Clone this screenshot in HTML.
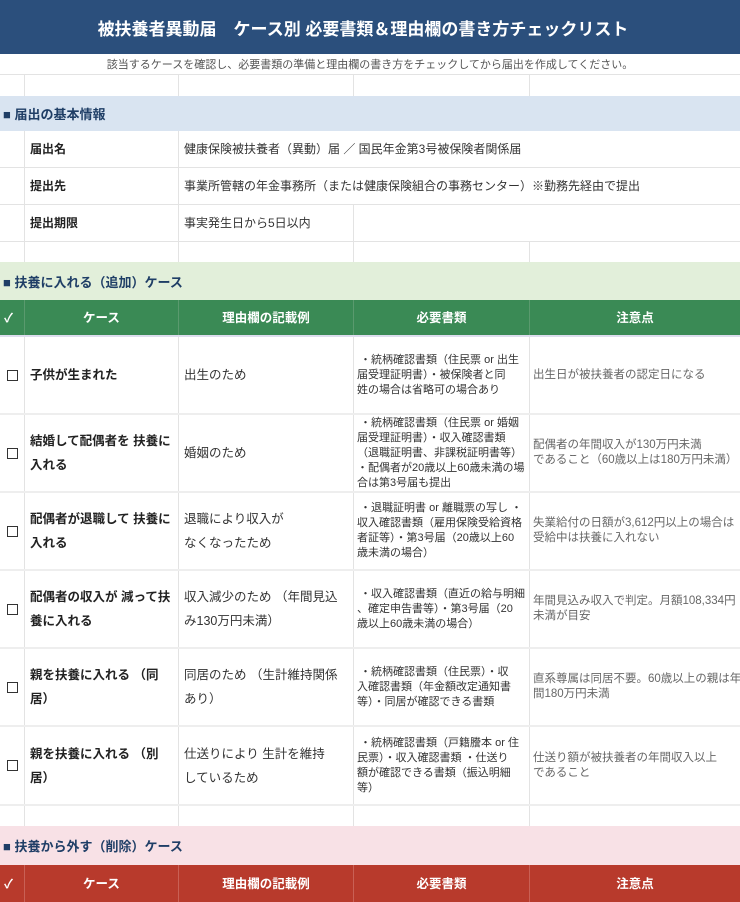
<!DOCTYPE html>
<html><head><meta charset="utf-8"><style>
*{margin:0;padding:0;box-sizing:border-box}
body{width:740px;height:880px;overflow:hidden;background:#fff;font-family:"Liberation Sans","Noto Sans CJK JP",sans-serif;color:#333;position:relative}
.r{position:absolute;left:0;width:740px}
.c{position:absolute;top:0;bottom:0;border-right:1px solid #e3e3e3;display:flex;align-items:center;font-size:12.5px;line-height:18px;padding:0 5px;white-space:nowrap}
.i{font-size:12px}
.b{font-weight:bold;color:#222;line-height:24px}
.g{color:#666;font-size:11.5px;line-height:15px;padding-left:3px}
.d{font-size:11px;line-height:15px;padding-left:3px}
.rs{line-height:24px}
.hd .c{color:#fff;font-weight:bold;justify-content:center;border-right:1px solid #5a9a6e}
.cb{justify-content:center}
.cb span{display:inline-block;width:11px;height:11px;border:1.3px solid #333}
.sec{font-size:13px;font-weight:bold;color:#1f3e66;padding-left:3px;display:flex;align-items:center}
</style></head><body>
<div class="r" style="top:0;height:54px;background:#2b4f7c;color:#fff;font-size:17px;font-weight:bold;display:flex;align-items:center;justify-content:center;padding-right:14px">被扶養者異動届　ケース別 必要書類＆理由欄の書き方チェックリスト</div>
<div class="r" style="top:54px;height:21px;border-bottom:1px solid #e3e3e3;font-size:11px;color:#555;display:flex;align-items:center;justify-content:center">該当するケースを確認し、必要書類の準備と理由欄の書き方をチェックしてから届出を作成してください。</div>
<div class="r" style="top:75px;height:21px"><div class="c" style="left:0;width:25px"></div><div class="c" style="left:25px;width:154px"></div><div class="c" style="left:179px;width:175px"></div><div class="c" style="left:354px;width:176px"></div></div>
<div class="r sec" style="top:96px;height:35px;background:#d9e4f1">■ 届出の基本情報</div>
<div class="r" style="top:131px;height:37px;border-bottom:1px solid #e3e3e3"><div class="c" style="left:0;width:25px"></div><div class="c b i" style="left:25px;width:154px">届出名</div><div class="c i" style="left:179px;width:561px;border:none">健康保険被扶養者（異動）届 ／ 国民年金第3号被保険者関係届</div></div>
<div class="r" style="top:168px;height:37px;border-bottom:1px solid #e3e3e3"><div class="c" style="left:0;width:25px"></div><div class="c b i" style="left:25px;width:154px">提出先</div><div class="c i" style="left:179px;width:561px;border:none">事業所管轄の年金事務所（または健康保険組合の事務センター）※勤務先経由で提出</div></div>
<div class="r" style="top:205px;height:37px;border-bottom:1px solid #e3e3e3"><div class="c" style="left:0;width:25px"></div><div class="c b i" style="left:25px;width:154px">提出期限</div><div class="c i" style="left:179px;width:175px">事実発生日から5日以内</div></div>
<div class="r" style="top:242px;height:20px"><div class="c" style="left:0;width:25px"></div><div class="c" style="left:25px;width:154px"></div><div class="c" style="left:179px;width:175px"></div><div class="c" style="left:354px;width:176px"></div></div>
<div class="r sec" style="top:262px;height:38px;background:#e2efda">■ 扶養に入れる（追加）ケース</div>
<div class="r hd" style="top:300px;height:37px;background:#3a8a55;border-bottom:2px solid #dde">
<div class="c" style="left:0;width:25px;justify-content:flex-start;padding-left:4px">✓</div><div class="c" style="left:25px;width:154px">ケース</div><div class="c" style="left:179px;width:175px">理由欄の記載例</div><div class="c" style="left:354px;width:176px">必要書類</div><div class="c" style="left:530px;width:210px;border:none">注意点</div></div>

<div class="r" style="top:337px;height:78px;border-bottom:2px solid #eee"><div class="c cb" style="left:0;width:25px"><span></span></div><div class="c b" style="left:25px;width:154px">子供が生まれた</div><div class="c" style="left:179px;width:175px">出生のため</div><div class="c d" style="left:354px;width:176px">&nbsp;・統柄確認書類（住民票 or 出生<br>届受理証明書）・被保険者と同<br>姓の場合は省略可の場合あり</div><div class="c g" style="left:530px;width:210px;border:none">出生日が被扶養者の認定日になる</div></div>
<div class="r" style="top:415px;height:78px;border-bottom:2px solid #eee"><div class="c cb" style="left:0;width:25px"><span></span></div><div class="c b" style="left:25px;width:154px">結婚して配偶者を 扶養に<br>入れる</div><div class="c" style="left:179px;width:175px">婚姻のため</div><div class="c d" style="left:354px;width:176px">&nbsp;・統柄確認書類（住民票 or 婚姻<br>届受理証明書）・収入確認書類<br>（退職証明書、非課税証明書等）<br>・配偶者が20歳以上60歳未満の場<br>合は第3号届も提出</div><div class="c g" style="left:530px;width:210px;border:none">配偶者の年間収入が130万円未満<br>であること（60歳以上は180万円未満）</div></div>
<div class="r" style="top:493px;height:78px;border-bottom:2px solid #eee"><div class="c cb" style="left:0;width:25px"><span></span></div><div class="c b" style="left:25px;width:154px">配偶者が退職して 扶養に<br>入れる</div><div class="c rs" style="left:179px;width:175px">退職により収入が<br>なくなったため</div><div class="c d" style="left:354px;width:176px">&nbsp;・退職証明書 or 離職票の写し ・<br>収入確認書類（雇用保険受給資格<br>者証等）・第3号届（20歳以上60<br>歳未満の場合）</div><div class="c g" style="left:530px;width:210px;border:none">失業給付の日額が3,612円以上の場合は<br>受給中は扶養に入れない</div></div>
<div class="r" style="top:571px;height:78px;border-bottom:2px solid #eee"><div class="c cb" style="left:0;width:25px"><span></span></div><div class="c b" style="left:25px;width:154px">配偶者の収入が 減って扶<br>養に入れる</div><div class="c rs" style="left:179px;width:175px">収入減少のため （年間見込<br>み130万円未満）</div><div class="c d" style="left:354px;width:176px">&nbsp;・収入確認書類（直近の給与明細<br>、確定申告書等）・第3号届（20<br>歳以上60歳未満の場合）</div><div class="c g" style="left:530px;width:210px;border:none">年間見込み収入で判定。月額108,334円<br>未満が目安</div></div>
<div class="r" style="top:649px;height:78px;border-bottom:2px solid #eee"><div class="c cb" style="left:0;width:25px"><span></span></div><div class="c b" style="left:25px;width:154px">親を扶養に入れる （同<br>居）</div><div class="c rs" style="left:179px;width:175px">同居のため （生計維持関係<br>あり）</div><div class="c d" style="left:354px;width:176px">&nbsp;・統柄確認書類（住民票）・収<br>入確認書類（年金額改定通知書<br>等）・同居が確認できる書類</div><div class="c g" style="left:530px;width:210px;border:none">直系尊属は同居不要。60歳以上の親は年<br>間180万円未満</div></div>
<div class="r" style="top:727px;height:79px;border-bottom:2px solid #eee"><div class="c cb" style="left:0;width:25px"><span></span></div><div class="c b" style="left:25px;width:154px">親を扶養に入れる （別<br>居）</div><div class="c rs" style="left:179px;width:175px">仕送りにより 生計を維持<br>しているため</div><div class="c d" style="left:354px;width:176px">&nbsp;・統柄確認書類（戸籍謄本 or 住<br>民票）・収入確認書類 ・仕送り<br>額が確認できる書類（振込明細<br>等）</div><div class="c g" style="left:530px;width:210px;border:none">仕送り額が被扶養者の年間収入以上<br>であること</div></div>
<div class="r" style="top:806px;height:20px"><div class="c" style="left:0;width:25px"></div><div class="c" style="left:25px;width:154px"></div><div class="c" style="left:179px;width:175px"></div><div class="c" style="left:354px;width:176px"></div></div>
<div class="r sec" style="top:826px;height:39px;background:#f8e1e6">■ 扶養から外す（削除）ケース</div>
<div class="r hd" style="top:865px;height:37px;background:#b83a2c">
<div class="c" style="left:0;width:25px;justify-content:flex-start;padding-left:4px;border-right-color:#c96055">✓</div><div class="c" style="left:25px;width:154px;border-right-color:#c96055">ケース</div><div class="c" style="left:179px;width:175px;border-right-color:#c96055">理由欄の記載例</div><div class="c" style="left:354px;width:176px;border-right-color:#c96055">必要書類</div><div class="c" style="left:530px;width:210px;border:none">注意点</div></div>
</body></html>
